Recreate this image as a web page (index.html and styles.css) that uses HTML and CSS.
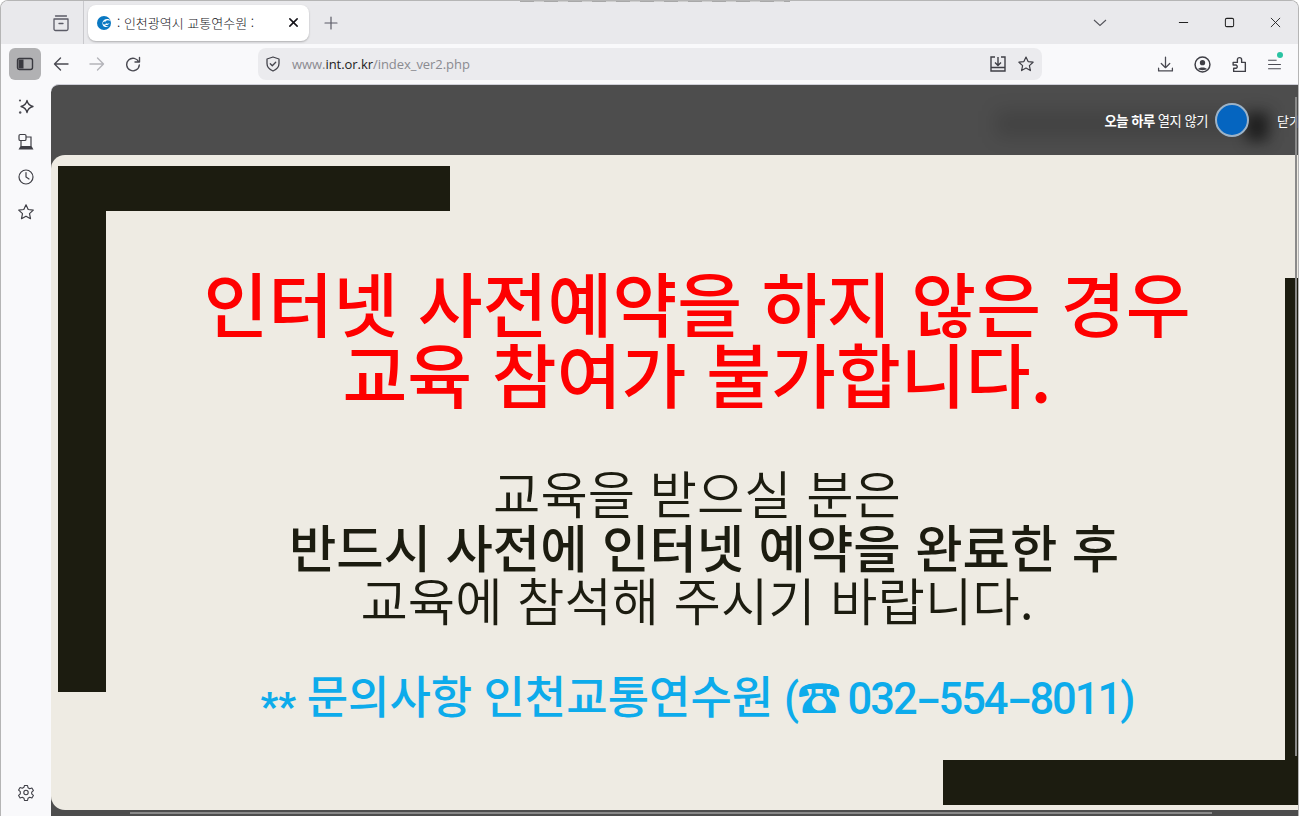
FILE: index.html
```html
<!DOCTYPE html>
<html lang="ko">
<head>
<meta charset="utf-8">
<title>인천광역시 교통연수원</title>
<link rel="stylesheet" href="styles.css">
</head>
<body>
<div class="window">
  <header class="tabbar">
    <span class="sliver"></span>
    <div class="tabbar-left">
      <svg class="icon" viewBox="0 0 18 18"><path d="M3.500 2h11M2 5h14v10a1.500 1.500 0 0 1-1.500 1.500h-11A1.500 1.500 0 0 1 2 15zM7 9.500h4" fill="none" stroke="#5b5b66" stroke-width="1.300" stroke-linecap="round" stroke-linejoin="round"/></svg>
    </div>
    <div class="tab">
      <svg class="favicon" viewBox="0 0 16 16"><circle cx="8" cy="8" r="8" fill="#0a78c2"/><path d="M16 5.500C14 3 10.500 2.800 8 4.500 6 6 5.500 9 7 11c1.500 1.800 4.500 2.200 6.500 1-2 .2-3.800-.5-4.500-2 2 .8 4.500 0 5.500-2-1.500 1-3.500 1-4.700 0C9 7 9.500 5 12 4.800c1.500 0 3 .3 4 .7z" fill="#fff"/><circle cx="8.500" cy="8" r="1.800" fill="#0a78c2"/></svg>
      <span class="tab-title">: 인천광역시 교통연수원 :</span>
      <svg class="tab-close" viewBox="0 0 12 12"><path d="M2 2l8 8M10 2l-8 8" stroke="#15141a" stroke-width="1.700" stroke-linecap="round"/></svg>
    </div>
    <svg class="new-tab" viewBox="0 0 14 14"><path d="M7 1v12M1 7h12" stroke="#5b5b66" stroke-width="1.200" stroke-linecap="round"/></svg>
    <div class="tabbar-right">
      <svg class="chev" viewBox="0 0 14 8"><path d="M1 1l6 5.500L13 1" fill="none" stroke="#55555c" stroke-width="1.100"/></svg>
      <div class="win-controls">
        <svg class="win-btn" viewBox="0 0 12 12"><path d="M1 6h10" stroke="#222" stroke-width="1.100"/></svg>
        <svg class="win-btn" viewBox="0 0 12 12"><rect x="1.500" y="1.500" width="9" height="9" rx="1.500" fill="none" stroke="#222" stroke-width="1.100"/></svg>
        <svg class="win-btn" viewBox="0 0 12 12"><path d="M1 1l10 10M11 1L1 11" stroke="#222" stroke-width="1"/></svg>
      </div>
    </div>
  </header>

  <nav class="toolbar">
    <div class="sidebar-toggle">
      <svg class="icon" viewBox="0 0 18 18"><rect x="1.500" y="3.500" width="15" height="11" rx="2" fill="none" stroke="#3a3a40" stroke-width="1.400"/><rect x="2.500" y="4.500" width="5" height="9" fill="#3a3a40"/></svg>
    </div>
    <div class="nav-buttons">
      <svg class="icon" viewBox="0 0 16 16"><path d="M15 8H1.500M7.500 2L1.500 8l6 6" fill="none" stroke="#4a4a52" stroke-width="1.400" stroke-linecap="round" stroke-linejoin="round"/></svg>
      <svg class="icon" viewBox="0 0 16 16"><path d="M1 8h13.500M8.500 2l6 6-6 6" fill="none" stroke="#b4b4b9" stroke-width="1.400" stroke-linecap="round" stroke-linejoin="round"/></svg>
      <svg class="icon" viewBox="0 0 16 16"><path d="M13.800 6A6.300 6.300 0 1 0 14.300 9M14.500 1.500V6H10" fill="none" stroke="#4a4a52" stroke-width="1.400" stroke-linecap="round" stroke-linejoin="round"/></svg>
    </div>
    <div class="urlbar">
      <svg class="icon shield" viewBox="0 0 16 16"><path d="M8 1l6 2v4.500c0 3.500-2.500 6-6 7.500-3.500-1.500-6-4-6-7.500V3z" fill="none" stroke="#44444c" stroke-width="1.300" stroke-linejoin="round"/><path d="M5.300 7.800l2 2 3.400-3.600" fill="none" stroke="#44444c" stroke-width="1.300" stroke-linecap="round" stroke-linejoin="round"/></svg>
      <span class="url"><span class="url-dim">www.</span><span class="url-host">int.or.kr</span><span class="url-dim">/index_ver2.php</span></span>
      <svg class="icon" viewBox="0 0 18 18"><path d="M6 2H2v14h14V2h-4M9 2v8M6 7.500l3 3 3-3M2 12.500h14" fill="none" stroke="#3f3f46" stroke-width="1.400"/></svg>
      <svg class="icon" viewBox="0 0 18 18"><path d="M9 2l2.100 4.600 5 .6-3.700 3.400 1 5L9 13.100 4.600 15.600l1-5L1.900 7.200l5-.6z" fill="none" stroke="#3f3f46" stroke-width="1.200" stroke-linejoin="round"/></svg>
    </div>
    <div class="tools">
      <svg class="icon" viewBox="0 0 16 16"><path d="M8 1v9.500M4 7l4 4 4-4M1.500 11.500v2.500h13v-2.500" fill="none" stroke="#4a4a52" stroke-width="1.200" stroke-linecap="round" stroke-linejoin="round"/></svg>
      <svg class="icon" viewBox="0 0 16 16"><circle cx="8" cy="8" r="7" fill="none" stroke="#3f3f46" stroke-width="1.400"/><circle cx="8" cy="6.300" r="2.500" fill="#3f3f46"/><path d="M3.800 12.300c1-2 7.400-2 8.400 0-1 1.400-7.400 1.400-8.400 0z" fill="#3f3f46"/></svg>
      <svg class="icon" viewBox="0 0 16 16"><path d="M2 6h4V3.500a2 2 0 0 1 4 0V6h3.500v8.500H2.500v-3H5a1.700 1.700 0 0 0 0-3H2z" fill="none" stroke="#3f3f46" stroke-width="1.300" stroke-linejoin="round"/></svg>
      <div class="menu-btn">
        <svg class="icon" viewBox="0 0 16 16"><path d="M2 4h8M2 8h12M2 12h12" stroke="#4a4a52" stroke-width="1.100"/></svg>
        <span class="menu-dot"></span>
      </div>
    </div>
  </nav>

  <div class="body">
    <aside class="sidebar">
      <div class="side-top">
        <svg class="icon" viewBox="0 0 18 18"><path d="M10 2.500c.7 3.300 2.300 5 6 6-3.700 1-5.300 2.700-6 6-.7-3.300-2.300-5-6-6 3.700-1 5.300-2.700 6-6z" fill="none" stroke="#3f3f46" stroke-width="1.300" stroke-linejoin="round"/><circle cx="3" cy="2.500" r="1.100" fill="#55555c"/><circle cx="3.200" cy="14.500" r="1.200" fill="#55555c"/></svg>
        <svg class="icon" viewBox="0 0 18 18"><rect x="2" y="1.500" width="7" height="6" rx="1.300" fill="none" stroke="#3f3f46" stroke-width="1.200"/><path d="M9 4h5v9M4 8v5" fill="none" stroke="#3f3f46" stroke-width="1.200"/><path d="M3.500 13h11l2 3.500H1.500z" fill="#3f3f46"/></svg>
        <svg class="icon" viewBox="0 0 18 18"><circle cx="9" cy="9" r="7" fill="none" stroke="#3f3f46" stroke-width="1.200"/><path d="M9 4.500V9l3 2" fill="none" stroke="#3f3f46" stroke-width="1.200" stroke-linecap="round"/></svg>
        <svg class="icon" viewBox="0 0 18 18"><path d="M9 1.800l2.200 4.700 5.100.6-3.800 3.500 1 5.100L9 13.200l-4.500 2.500 1-5.100L1.700 7.100l5.100-.6z" fill="none" stroke="#3f3f46" stroke-width="1.200" stroke-linejoin="round"/></svg>
      </div>
      <svg class="icon" viewBox="0 0 18 18"><path d="M7.500 1.500h3l.5 2.200 1.700 1 2.200-.7 1.500 2.600-1.700 1.500v1.800l1.700 1.500-1.500 2.600-2.200-.7-1.700 1-.5 2.200h-3l-.5-2.200-1.700-1-2.200.7-1.500-2.600 1.700-1.500V7.600L1.600 6.100l1.500-2.600 2.200.7 1.700-1z" fill="none" stroke="#3f3f46" stroke-width="1.100" stroke-linejoin="round"/><circle cx="9" cy="8.500" r="2.200" fill="none" stroke="#3f3f46" stroke-width="1.100"/></svg>
    </aside>

    <main class="content">
      <span class="glow"></span>
      <span class="glow-dark"></span>
      <div class="popup-top">
        <div class="today"><b>오늘 하루</b> 열지 않기</div>
        <span class="radio"></span>
        <span class="close-label">닫기</span>
      </div>
      <section class="poster">
        <span class="bar bar-tl-h"></span>
        <span class="bar bar-tl-v"></span>
        <span class="bar bar-br-h"></span>
        <span class="bar bar-br-v"></span>
        <h1 class="headline">인터넷 사전예약을 하지 않은 경우<br>교육 참여가 불가합니다.</h1>
        <p class="notice">교육을 받으실 분은<br><strong>반드시 사전에 인터넷 예약을 완료한 후</strong><br>교육에 참석해 주시기 바랍니다.</p>
        <p class="contact"><span class="stars">**</span> <span class="contact-ko">문의사항 인천교통연수원</span> <span class="phone">(☎ 032<span class="dash">-</span>554<span class="dash">-</span>8011)</span></p>
      </section>
      <span class="scroll-v"></span>
      <span class="scroll-h"></span>
    </main>
  </div>
</div>
</body>
</html>
```
FILE: styles.css
```css
* { box-sizing: border-box; }
html, body { margin: 0; height: 100%; overflow: hidden; background: #fff; }
body { font-family: "Noto Sans CJK KR", "Noto Sans", sans-serif; }
.window {
  height: 816px;
  display: flex;
  flex-direction: column;
  border: 1px solid #b5b5b5;
  border-bottom: 0;
  border-radius: 8px 8px 0 0;
  overflow: hidden;
  background: #f9f9fb;
}
.icon { width: 18px; height: 18px; flex: none; display: block; }

.tabbar { position: relative; height: 43px; flex: none; display: flex; align-items: center; background: #e9e9ec; }
.sliver { position: absolute; left: 519px; top: 0; width: 270px; height: 1px; background: repeating-linear-gradient(90deg, #a8a8a8 0 14px, #cfcfcf 14px 24px); }
.tabbar-left { width: 83px; height: 43px; flex: none; display: flex; align-items: center; justify-content: center; padding-left: 37px; border-right: 1px solid #c9c9cd; margin-right: 4px; }
.tab { width: 221px; height: 36px; flex: none; display: flex; align-items: center; padding: 0 10px 0 9px; background: #fff; border-radius: 8px; box-shadow: 0 1px 2px rgba(0,0,0,.25); }
.favicon { width: 14px; height: 14px; flex: none; }
.tab-title { flex: 1; margin-left: 6px; font-size: 13px; font-weight: 300; color: #15141a; white-space: nowrap; }
.tab-close { width: 11px; height: 11px; flex: none; }
.new-tab { width: 14px; height: 14px; flex: none; margin-left: 15px; }
.tabbar-right { margin-left: auto; display: flex; align-items: center; }
.chev { width: 14px; height: 8px; margin-right: 71px; }
.win-controls { display: flex; gap: 35px; padding-right: 17px; }
.win-btn { width: 11px; height: 11px; }

.toolbar { height: 40px; flex: none; display: flex; align-items: center; background: #f9f9fb; }
.sidebar-toggle { width: 32px; height: 32px; flex: none; margin-left: 8px; border-radius: 6px; background: #b1b1b3; display: flex; align-items: center; justify-content: center; }
.nav-buttons { display: flex; gap: 20px; margin-left: 12px; flex: none; }
.nav-buttons .icon { width: 16px; height: 16px; }
.urlbar { width: 784px; height: 32px; flex: none; margin-left: 117px; display: flex; align-items: center; gap: 10px; padding: 0 7px; background: #ebebee; border-radius: 8px; }
.shield { width: 16px; height: 16px; }
.url { flex: 1; font-family: "Open Sans", sans-serif; font-size: 13px; letter-spacing: -.05px; color: #8a8a90; margin-left: 1px; white-space: nowrap; }
.url-host { color: #222; }
.tools { display: flex; gap: 20px; margin-left: auto; padding-right: 15px; align-items: center; }
.tools .icon { width: 17px; height: 17px; }
.menu-btn { position: relative; margin-left: -2px; }
.menu-dot { position: absolute; top: -4px; right: 0; width: 6px; height: 6px; border-radius: 50%; background: #2ac3a2; }

.body { flex: 1; display: flex; min-height: 0; }
.sidebar { width: 50px; flex: none; display: flex; flex-direction: column; justify-content: space-between; align-items: center; padding: 14px 0 14px; background: #f9f9fb; }
.side-top { display: flex; flex-direction: column; gap: 17px; }
.content { position: relative; flex: 1; min-width: 0; background: #4d4d4d; border-top: 1px solid #cfcfd8; border-radius: 8px 0 0 0; overflow: hidden; }
.glow { position: absolute; left: 945px; top: 26px; width: 275px; height: 26px; background: rgba(0,0,0,.13); filter: blur(9px); }
.glow-dark { position: absolute; left: 1195px; top: 28px; width: 22px; height: 28px; background: rgba(0,0,0,.55); filter: blur(7px); }
.popup-top { position: relative; height: 70px; display: flex; align-items: center; justify-content: flex-end; color: #fff; white-space: nowrap; }
.today { font-size: 13.300px; margin-right: 7px; letter-spacing: -.5px; }
.radio { width: 34px; height: 34px; flex: none; border-radius: 50%; background: #0565c0; border: 2px solid #9db3c7; }
.close-label { font-size: 13px; margin-left: 28px; width: 21px; overflow: hidden; }
.poster { position: relative; width: 1292px; height: 655px; background: #eeebe3; border-radius: 14px 0 0 14px; text-align: center; padding-top: 111px; }
.bar { position: absolute; background: #1c1c10; }
.bar-tl-h { left: 7px; top: 11px; width: 392px; height: 45px; }
.bar-tl-v { left: 7px; top: 11px; width: 48px; height: 526px; }
.bar-br-h { left: 892px; top: 605px; width: 400px; height: 45px; }
.bar-br-v { left: 1234px; top: 123px; width: 58px; height: 527px; }
.headline { margin: 0; font-size: 70.500px; line-height: 71px; font-weight: 500; color: #fe0000; }
.notice { margin: 57px 0 0; font-size: 51.500px; line-height: 53.500px; font-weight: 350; color: #1c1c10; }
.notice strong { font-weight: 500; padding-left: 14px; }
.contact { margin: 48px 0 0; font-family: Roboto, "Noto Sans CJK KR", sans-serif; font-size: 43.500px; line-height: 50px; font-weight: 500; color: #0dabeb; white-space: nowrap; }
.stars { font-size: 38px; font-weight: 900; vertical-align: -.15em; }
.contact-ko { font-size: 45px; }
.phone { letter-spacing: -2px; }
.dash { display: inline-block; transform: scaleX(1.7); margin: 0 5px; }
.scroll-v { position: absolute; right: 1px; top: 12px; bottom: 60px; width: 2px; background: #8a8a8a; }
.scroll-h { position: absolute; left: 79px; right: 86px; bottom: 2px; height: 2px; background: #8a8a8a; }
```
